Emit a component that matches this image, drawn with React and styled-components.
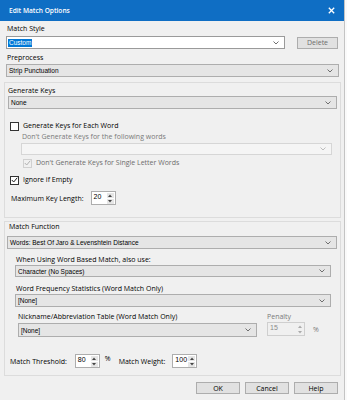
import React from "react";
import styled, { createGlobalStyle } from "styled-components";

const Global = createGlobalStyle`
  html, body { margin: 0; padding: 0; background: #fafafa; }
  #root { width: 347px; height: 400px; }
`;

const Screen = styled.div`
  width: 347px;
  height: 400px;
  display: flex;
  background: #fafafa;
  overflow: hidden;
`;

const Dialog = styled.div`
  width: 345px;
  height: 400px;
  flex: none;
  box-sizing: border-box;
  border-right: 1px solid #c4c4c4;
  background: #f0f0f0;
  display: flex;
  flex-direction: column;
  font-family: "Open Sans", "Noto Sans", sans-serif;
  font-size: 7px;
  color: #000;
`;

const TitleBar = styled.div`
  height: 21px;
  flex: none;
  background: #0f6ec4;
  color: #fff;
  display: flex;
  align-items: center;
  justify-content: space-between;
  padding: 0 9px;
  font-size: 6.6px;
  font-weight: 600;
`;

const Label = styled.div`
  height: 10px;
  line-height: 10px;
  margin: ${(p) => p.$mt || 0}px 0 0 ${(p) => p.$ml || 0}px;
  color: ${(p) => (p.$muted ? "#7a7a7a" : "#000")};
  white-space: nowrap;
`;

const Row = styled.div`
  display: flex;
  align-items: ${(p) => p.$align || "center"};
  margin: ${(p) => p.$mt || 0}px ${(p) => p.$mr || 0}px 0 ${(p) => p.$ml || 0}px;
  gap: ${(p) => p.$gap || 0}px;
`;

const Combo = styled.div`
  width: 279px;
  height: 13px;
  box-sizing: border-box;
  border: 1px solid #9a9a9a;
  background: #fff;
  display: flex;
  align-items: center;
  justify-content: space-between;
  padding: 0 5px 0 1px;
  font-family: "Liberation Sans", Arial, sans-serif;
  font-size: 6.5px;
`;

const Selected = styled.span`
  background: #0078d7;
  color: #fff;
  line-height: 8px;
  padding: 0 1px;
`;

const Select = styled.div`
  height: ${(p) => p.$h || 13}px;
  ${(p) => (p.$w ? `width: ${p.$w}px; flex: none;` : "")}
  box-sizing: border-box;
  margin: ${(p) => p.$mt || 0}px ${(p) => p.$mr || 0}px 0 ${(p) => p.$ml || 0}px;
  border: 1px solid ${(p) => (p.$disabled ? "#d6d6d6" : "#adadad")};
  background: ${(p) => (p.$disabled ? "#f5f5f5" : "#e5e5e5")};
  display: flex;
  align-items: center;
  justify-content: space-between;
  padding: 0 5px 0 2px;
  font-family: "Liberation Sans", Arial, sans-serif;
  font-size: 6.5px;
`;

const Button = styled.div`
  width: ${(p) => p.$w || 44}px;
  height: 12px;
  box-sizing: border-box;
  border: 1px solid #adadad;
  background: #e1e1e1;
  display: flex;
  align-items: center;
  justify-content: center;
  font-size: 7px;
  color: ${(p) => (p.$disabled ? "#6d6d6d" : "#000")};
`;

const Group = styled.div`
  margin: ${(p) => p.$mt || 0}px 3px 0 4px;
  height: ${(p) => p.$h}px;
  flex: none;
  box-sizing: border-box;
  border: 1px solid #dcdcdc;
  display: flex;
  flex-direction: column;
`;

const Box = styled.span`
  width: 9px;
  height: 9px;
  flex: none;
  box-sizing: border-box;
  border: 1px solid ${(p) => (p.$disabled ? "#d0d0d0" : "#333")};
  background: ${(p) => (p.$disabled ? "#f0f0f0" : "#fff")};
  display: flex;
  align-items: center;
  justify-content: center;
`;

const CheckText = styled.span`
  color: ${(p) => (p.$disabled ? "#6d6d6d" : "#000")};
  line-height: 10px;
  white-space: nowrap;
`;

const Spin = styled.div`
  width: ${(p) => p.$w || 25}px;
  height: ${(p) => p.$h || 14}px;
  flex: none;
  box-sizing: border-box;
  border: 1px solid ${(p) => (p.$disabled ? "#cfcfcf" : "#adadad")};
  background: ${(p) => (p.$disabled ? "#f0f0f0" : "#fff")};
  display: flex;
  justify-content: space-between;
  padding: 0 1px 0 2px;
  font-family: "Liberation Sans", Arial, sans-serif;
  font-size: 7px;
  line-height: 9px;
  color: ${(p) => (p.$disabled ? "#8a8a8a" : "#000")};
`;

const Arrows = styled.div`
  width: 7px;
  display: flex;
  flex-direction: column;
  justify-content: center;
  gap: 1px;
`;

const ArrowBtn = styled.div`
  height: 5px;
  background: ${(p) => (p.$disabled ? "#f0f0f0" : "#e6e6e6")};
  display: flex;
  align-items: center;
  justify-content: center;
`;

const Unit = styled.span`
  color: ${(p) => (p.$muted ? "#7a7a7a" : "#000")};
  align-self: ${(p) => p.$self || "center"};
  margin-left: ${(p) => p.$ml || 0}px;
`;

const Col = styled.div`
  display: flex;
  flex-direction: column;
  ${(p) => (p.$w ? `width: ${p.$w}px;` : "")}
`;

const Chevron = ({ disabled }) => (
  <svg width="6" height="4" viewBox="0 0 6 4">
    <polyline points="0.5,0.5 3,3 5.5,0.5" fill="none" stroke={disabled ? "#b5b5b5" : "#606060"} strokeWidth="0.9" />
  </svg>
);

const Check = ({ disabled }) => (
  <svg width="7" height="6" viewBox="0 0 7 6">
    <polyline points="0.8,3 2.7,5 6.2,0.8" fill="none" stroke={disabled ? "#b0b0b0" : "#222"} strokeWidth="1" />
  </svg>
);

const Tri = ({ up, disabled }) => (
  <svg width="4" height="3" viewBox="0 0 4 3">
    <polygon points={up ? "0,3 2,0.5 4,3" : "0,0 2,2.5 4,0"} fill={disabled ? "#aaa" : "#444"} />
  </svg>
);

const SpinBox = ({ value, disabled, w, h }) => (
  <Spin $disabled={disabled} $w={w} $h={h}>
    <span>{value}</span>
    <Arrows>
      <ArrowBtn $disabled={disabled}><Tri up disabled={disabled} /></ArrowBtn>
      <ArrowBtn $disabled={disabled}><Tri disabled={disabled} /></ArrowBtn>
    </Arrows>
  </Spin>
);

const CheckBox = ({ checked, disabled, children, ml, mt }) => (
  <Row $ml={ml} $mt={mt} $gap={4}>
    <Box $disabled={disabled}>{checked && <Check disabled={disabled} />}</Box>
    <CheckText $disabled={disabled}>{children}</CheckText>
  </Row>
);

export default function App() {
  return (
    <>
      <Global />
      <Screen>
        <Dialog>
          <TitleBar>
            <span>Edit Match Options</span>
            <svg width="7" height="7" viewBox="0 0 7 7">
              <path d="M0.8 0.8 L6.2 6.2 M6.2 0.8 L0.8 6.2" stroke="#fff" strokeWidth="1.3" />
            </svg>
          </TitleBar>

          <Label $mt={3} $ml={7}>Match Style</Label>
          <Row $mt={2} $ml={6} $mr={6} style={{ justifyContent: "space-between" }}>
            <Combo>
              <Selected>Custom</Selected>
              <Chevron />
            </Combo>
            <Button $w={41} $disabled>Delete</Button>
          </Row>

          <Label $mt={4} $ml={7}>Preprocess</Label>
          <Select $mt={1} $ml={6} $mr={5}>
            <span>Strip Punctuation</span>
            <Chevron />
          </Select>

          <Group $mt={5} $h={136}>
            <Label $mt={3} $ml={3}>Generate Keys</Label>
            <Select $ml={3} $mr={3}>
              <span>None</span>
              <Chevron />
            </Select>
            <CheckBox ml={5} mt={12}>Generate Keys for Each Word</CheckBox>
            <Label $mt={1} $ml={17} $muted>Don't Generate Keys for the following words</Label>
            <Select $mt={1} $ml={16} $mr={8} $h={12} $disabled>
              <span />
              <Chevron disabled />
            </Select>
            <CheckBox ml={18} mt={3} checked disabled>Don't Generate Keys for Single Letter Words</CheckBox>
            <CheckBox ml={5} mt={7} checked>Ignore if Empty</CheckBox>
            <Row $mt={6} $ml={6} $gap={7}>
              <span>Maximum Key Length:</span>
              <SpinBox value="20" />
            </Row>
          </Group>

          <Group $mt={3} $h={155}>
            <Label $mt={0} $ml={4}>Match Function</Label>
            <Select $mt={4} $ml={2} $mr={3}>
              <span>Words: Best Of Jaro &amp; Levenshtein Distance</span>
              <Chevron />
            </Select>
            <Label $mt={6} $ml={11}>When Using Word Based Match, also use:</Label>
            <Select $ml={10} $mr={9} $h={12}>
              <span>Character (No Spaces)</span>
              <Chevron />
            </Select>
            <Label $mt={7} $ml={11}>Word Frequency Statistics (Word Match Only)</Label>
            <Select $ml={10} $mr={9}>
              <span>[None]</span>
              <Chevron />
            </Select>
            <Row $mt={5} $ml={13} $align="flex-start" $gap={10}>
              <Col $w={239}>
                <Label>Nickname/Abbreviation Table (Word Match Only)</Label>
                <Select $mt={1} $h={14}>
                  <span>[None]</span>
                  <Chevron />
                </Select>
              </Col>
              <Col>
                <Label $muted>Penalty</Label>
                <Row $gap={8}>
                  <SpinBox value="15" disabled w={38} />
                  <Unit $muted>%</Unit>
                </Row>
              </Col>
            </Row>
            <Row $mt={17} $ml={5}>
              <span>Match Threshold:</span>
              <Unit as="div" $ml={8}><SpinBox value="80" /></Unit>
              <Unit $ml={5} $self="flex-start">%</Unit>
              <Unit $ml={8}>Match Weight:</Unit>
              <Unit as="div" $ml={7}><SpinBox value="100" /></Unit>
            </Row>
          </Group>

          <Row $mt={6} $mr={6} $gap={5} style={{ justifyContent: "flex-end" }}>
            <Button>OK</Button>
            <Button>Cancel</Button>
            <Button>Help</Button>
          </Row>
        </Dialog>
      </Screen>
    </>
  );
}
